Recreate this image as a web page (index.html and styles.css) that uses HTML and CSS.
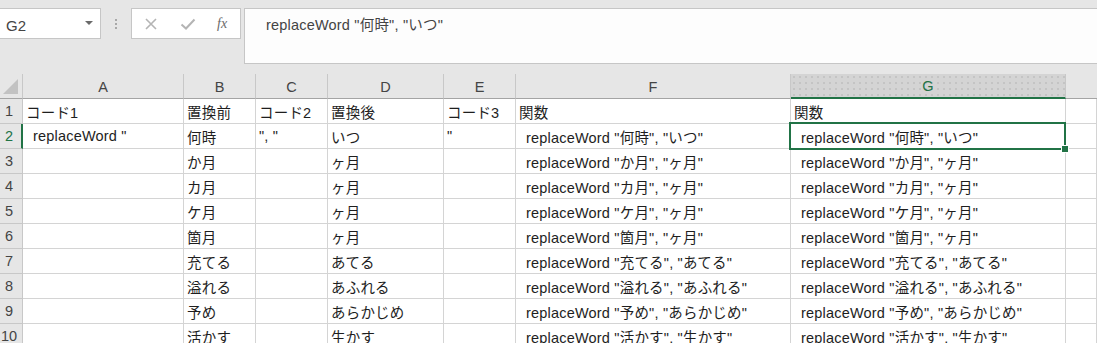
FILE: index.html
```html
<!DOCTYPE html>
<html lang="ja">
<head>
<meta charset="utf-8">
<title>Sheet</title>
<link rel="stylesheet" href="styles.css">
</head>
<body>
<div class="app">
  <div class="fbar">
    <div class="namebox"><span class="nb-text">G2</span><span class="nb-arrow"></span></div>
    <div class="sep"><span></span><span></span><span></span></div>
    <div class="btns">
      <svg class="ico" width="14" height="14" viewBox="0 0 14 14"><path d="M2 2 L12 12 M12 2 L2 12" stroke="#b4b4b4" stroke-width="1.6" fill="none"/></svg>
      <svg class="ico" width="16" height="14" viewBox="0 0 16 14"><path d="M1.5 7.5 L6 11.5 L14.5 2.5" stroke="#b4b4b4" stroke-width="2" fill="none"/></svg>
      <span class="fx">fx</span>
    </div>
    <div class="fbox">replaceWord "何時", "いつ"</div>
  </div>
  <div class="sheet">
    <div class="ch corner"><span class="tri"></span></div>
    <div class="ch">A</div>
    <div class="ch">B</div>
    <div class="ch">C</div>
    <div class="ch">D</div>
    <div class="ch">E</div>
    <div class="ch">F</div>
    <div class="ch sel">G</div>
    <div class="ch hcol"><span class="mark"></span></div>

    <div class="rh">1</div>
    <div class="c">コード1</div><div class="c">置換前</div><div class="c">コード2</div><div class="c">置換後</div><div class="c">コード3</div><div class="c">関数</div><div class="c">関数</div><div class="c"></div>

    <div class="rh rsel">2</div>
    <div class="c ind">replaceWord "</div><div class="c">何時</div><div class="c">", "</div><div class="c">いつ</div><div class="c">"</div><div class="c ind">replaceWord "何時", "いつ"</div><div class="c ind active">replaceWord "何時", "いつ"<span class="selbox"><span class="handle"></span></span></div><div class="c"></div>

    <div class="rh">3</div>
    <div class="c"></div><div class="c">か月</div><div class="c"></div><div class="c">ヶ月</div><div class="c"></div><div class="c ind">replaceWord "か月", "ヶ月"</div><div class="c ind">replaceWord "か月", "ヶ月"</div><div class="c"></div>

    <div class="rh">4</div>
    <div class="c"></div><div class="c">カ月</div><div class="c"></div><div class="c">ヶ月</div><div class="c"></div><div class="c ind">replaceWord "カ月", "ヶ月"</div><div class="c ind">replaceWord "カ月", "ヶ月"</div><div class="c"></div>

    <div class="rh">5</div>
    <div class="c"></div><div class="c">ケ月</div><div class="c"></div><div class="c">ヶ月</div><div class="c"></div><div class="c ind">replaceWord "ケ月", "ヶ月"</div><div class="c ind">replaceWord "ケ月", "ヶ月"</div><div class="c"></div>

    <div class="rh">6</div>
    <div class="c"></div><div class="c">箇月</div><div class="c"></div><div class="c">ヶ月</div><div class="c"></div><div class="c ind">replaceWord "箇月", "ヶ月"</div><div class="c ind">replaceWord "箇月", "ヶ月"</div><div class="c"></div>

    <div class="rh">7</div>
    <div class="c"></div><div class="c">充てる</div><div class="c"></div><div class="c">あてる</div><div class="c"></div><div class="c ind">replaceWord "充てる", "あてる"</div><div class="c ind">replaceWord "充てる", "あてる"</div><div class="c"></div>

    <div class="rh">8</div>
    <div class="c"></div><div class="c">溢れる</div><div class="c"></div><div class="c">あふれる</div><div class="c"></div><div class="c ind">replaceWord "溢れる", "あふれる"</div><div class="c ind">replaceWord "溢れる", "あふれる"</div><div class="c"></div>

    <div class="rh">9</div>
    <div class="c"></div><div class="c">予め</div><div class="c"></div><div class="c">あらかじめ</div><div class="c"></div><div class="c ind">replaceWord "予め", "あらかじめ"</div><div class="c ind">replaceWord "予め", "あらかじめ"</div><div class="c"></div>

    <div class="rh">10</div>
    <div class="c"></div><div class="c">活かす</div><div class="c"></div><div class="c">生かす</div><div class="c"></div><div class="c ind">replaceWord "活かす", "生かす"</div><div class="c ind">replaceWord "活かす", "生かす"</div><div class="c"></div>
  </div>
</div>
</body>
</html>
```

FILE: styles.css
```css
html, body {
  margin: 0;
  padding: 0;
  background: #fff;
  overflow: hidden;
}
.app {
  width: 1097px;
  height: 343px;
  overflow: hidden;
  font-family: "Liberation Sans", "Noto Sans CJK JP", sans-serif;
}
.fbar {
  height: 74px;
  box-sizing: border-box;
  padding-top: 8px;
  background: #e6e6e6;
  display: flex;
  align-items: flex-start;
}
.namebox {
  width: 101px;
  height: 31px;
  box-sizing: border-box;
  background: #fff;
  border: 1px solid #c6c6c6;
  border-left: none;
  display: flex;
  align-items: center;
  justify-content: space-between;
  padding: 3px 7px 0 6px;
}
.nb-text {
  font-size: 15px;
  color: #444;
}
.nb-arrow {
  width: 0;
  height: 0;
  border-left: 4px solid transparent;
  border-right: 4px solid transparent;
  border-top: 4px solid #6a6a6a;
  margin-top: -4px;
}
.sep {
  width: 30px;
  height: 31px;
  display: flex;
  flex-direction: column;
  align-items: center;
  justify-content: center;
  gap: 2px;
}
.sep span {
  width: 2px;
  height: 2px;
  background: #a8a8a8;
}
.btns {
  width: 110px;
  height: 31px;
  box-sizing: border-box;
  background: #fff;
  border: 1px solid #c6c6c6;
  display: flex;
  align-items: center;
  padding-left: 12px;
  gap: 22px;
}
.fx {
  font-family: "Liberation Serif", serif;
  font-style: italic;
  font-size: 14px;
  color: #6a6a6a;
  margin-left: -1px;
}
.fbox {
  flex: 1;
  margin-left: 3px;
  height: 56px;
  box-sizing: border-box;
  background: #fdfdfd;
  border: 1px solid #c6c6c6;
  border-right: none;
  padding: 4px 0 0 21px;
  font-size: 14.5px;
  color: #444;
  white-space: pre;
  letter-spacing: 0.2px;
}
.sheet {
  display: grid;
  grid-template-columns: 23px 161px 72px 72px 116px 72px 275px 275px 1fr;
  grid-auto-rows: 25px;
}
.ch {
  background: #e6e6e6;
  border-right: 1px solid #c8c8c8;
  border-bottom: 1px solid #a4a4a4;
  box-sizing: border-box;
  display: flex;
  align-items: center;
  justify-content: center;
  font-size: 14.5px;
  color: #444;
  padding-top: 1px;
}
.corner {
  position: relative;
}
.tri {
  position: absolute;
  right: 4px;
  bottom: 4px;
  width: 15px;
  height: 15px;
  background: #c2c2c2;
  clip-path: polygon(100% 0, 100% 100%, 0 100%);
}
.ch.sel {
  background-color: #d4d4d4;
  background-image: radial-gradient(#c4c4c4 0.8px, transparent 1px);
  background-size: 6px 6px;
  border-bottom: 2px solid #217346;
  color: #217346;
}
.hcol {
  position: relative;
  border-right: none;
}
.mark {
  position: absolute;
  left: 31px;
  top: 6px;
  width: 2px;
  height: 10px;
  background: #e9a24a;
}
.rh {
  background: #e6e6e6;
  border-right: 1px solid #c8c8c8;
  border-bottom: 1px solid #c8c8c8;
  box-sizing: border-box;
  font-size: 14.5px;
  color: #444;
  display: flex;
  align-items: center;
  justify-content: center;
  padding-right: 4px;
}
.rh.rsel {
  border-right: 2px solid #217346;
  color: #217346;
  padding-right: 3px;
}
.c {
  border-right: 1px solid #d4d4d4;
  border-bottom: 1px solid #d4d4d4;
  box-sizing: border-box;
  font-size: 14.5px;
  color: #1e1e1e;
  display: flex;
  align-items: center;
  padding-left: 3px;
  white-space: pre;
  overflow: visible;
  letter-spacing: 0.2px;
}
.c.ind {
  padding-left: 10px;
}
.active {
  position: relative;
}
.selbox {
  position: absolute;
  left: -2px;
  top: -2px;
  right: -1px;
  bottom: -2px;
  border: 2px solid #217346;
}
.handle {
  position: absolute;
  right: -5px;
  bottom: -5px;
  width: 6px;
  height: 6px;
  background: #217346;
  border: 1px solid #fff;
}
```
